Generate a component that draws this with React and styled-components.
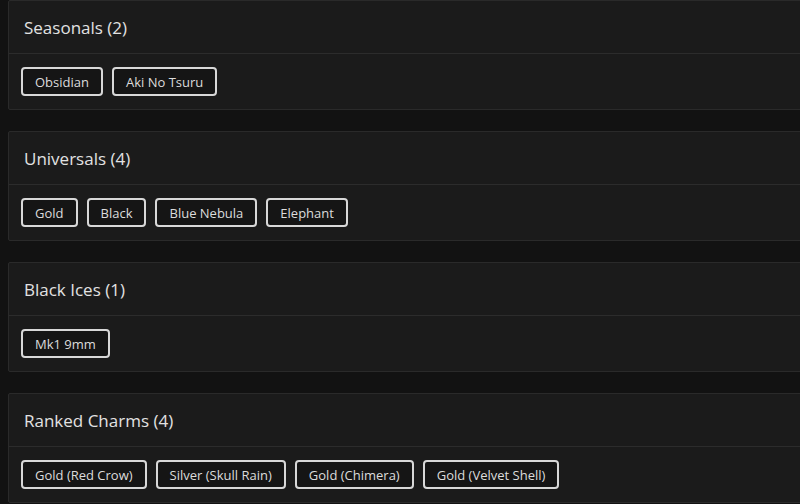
import React from 'react';
import styled, { createGlobalStyle } from 'styled-components';

const GlobalStyle = createGlobalStyle`
  html, body {
    margin: 0;
    padding: 0;
    background: #121212;
    overflow: hidden;
  }
`

const Page = styled.div`
  display: flex;
  flex-direction: column;
  gap: 21px;
  padding: 0 0 0 8px;
  width: 840px;
  font-family: "Open Sans", "Liberation Sans", sans-serif;
`

const Card = styled.section`
  background: #1b1b1b;
  border: 1px solid #2a2a2a;
  border-radius: 2px;
`

const CardHeader = styled.div`
  height: 52px;
  display: flex;
  align-items: center;
  padding: 0 15px;
  border-bottom: 1px solid #2c2c2c;
  color: #e2e2e2;
  font-size: 17px;
  font-weight: 500;
`

const CardBody = styled.div`
  display: flex;
  flex-wrap: wrap;
  gap: 9px;
  padding: 13px 12px;
`

const Tag = styled.button`
  font-family: inherit;
  font-size: 13px;
  color: #dcdcdc;
  background: #151515;
  border: 2px solid #d8d8d8;
  border-radius: 4px;
  height: 29px;
  padding: 0 12px;
  cursor: pointer;
`

const groups = [
  { title: 'Seasonals', items: ['Obsidian', 'Aki No Tsuru'] },
  { title: 'Universals', items: ['Gold', 'Black', 'Blue Nebula', 'Elephant'] },
  { title: 'Black Ices', items: ['Mk1 9mm'] },
  { title: 'Ranked Charms', items: ['Gold (Red Crow)', 'Silver (Skull Rain)', 'Gold (Chimera)', 'Gold (Velvet Shell)'] },
];

export default function App() {
  return (
    <>
      <GlobalStyle />
      <Page>
        {groups.map(g => (
          <Card key={g.title}>
            <CardHeader>{g.title} ({g.items.length})</CardHeader>
            <CardBody>
              {g.items.map(i => <Tag key={i}>{i}</Tag>)}
            </CardBody>
          </Card>
        ))}
      </Page>
    </>
  );
}
